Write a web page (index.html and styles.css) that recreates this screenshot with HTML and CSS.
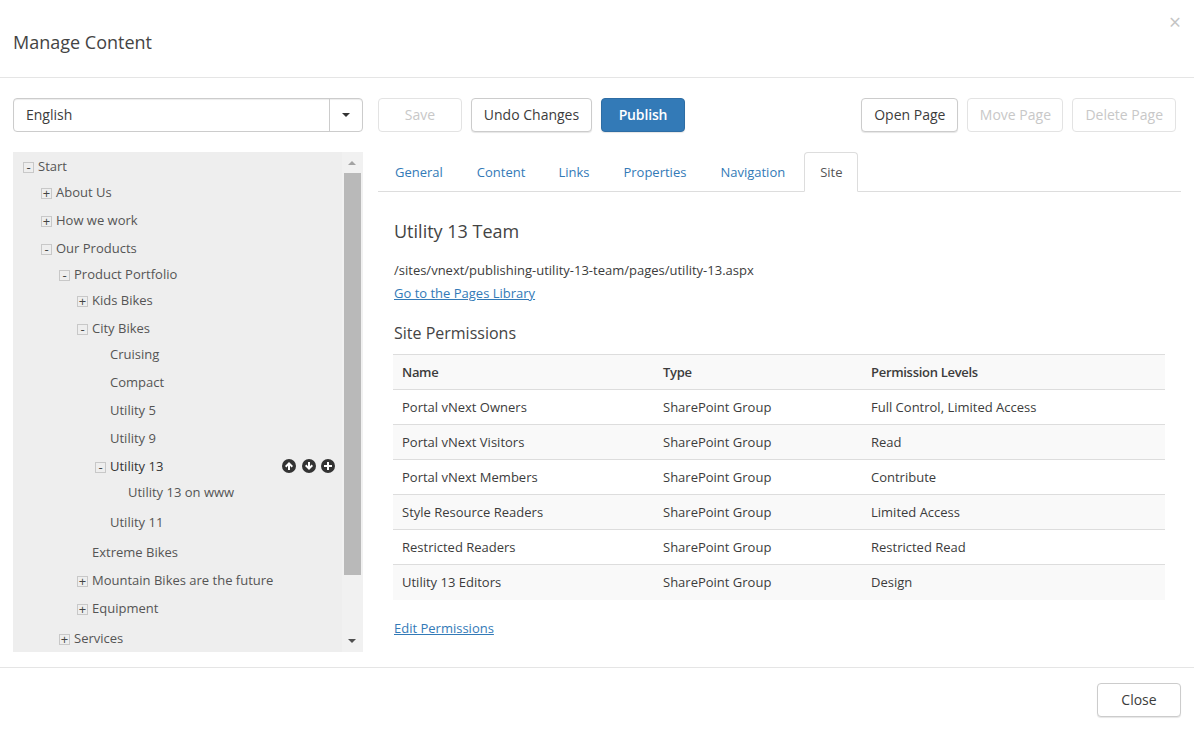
FILE: index.html
```html
<!DOCTYPE html>
<html lang="en">

<head>
    <meta charset="UTF-8">
    <title>Manage Content</title>
    <link rel="stylesheet" href="styles.css">
</head>

<body>
    <div class="modal">
        <header class="modal-header">
            <h1>Manage Content</h1>
            <span class="close-x">&times;</span>
        </header>

        <main class="modal-body">
            <aside class="left-col">
                <div class="lang-select">
                    <span class="lang-value">English</span>
                    <span class="lang-toggle"><i class="caret"></i></span>
                </div>
                <div class="tree-panel">
                    <div class="tree">
                        <ul>
                            <li class="open">
                                <div class="row"><span class="box">-</span>Start</div>
                                <ul>
                                    <li><div class="row"><span class="box">+</span>About Us</div></li>
                                    <li><div class="row"><span class="box">+</span>How we work</div></li>
                                    <li class="open">
                                        <div class="row"><span class="box">-</span>Our Products</div>
                                        <ul>
                                            <li class="open">
                                                <div class="row"><span class="box">-</span>Product Portfolio</div>
                                                <ul>
                                                    <li><div class="row"><span class="box">+</span>Kids Bikes</div></li>
                                                    <li class="open">
                                                        <div class="row"><span class="box">-</span>City Bikes</div>
                                                        <ul>
                                                            <li><div class="row"><span class="leaf"></span>Cruising</div></li>
                                                            <li><div class="row"><span class="leaf"></span>Compact</div></li>
                                                            <li><div class="row"><span class="leaf"></span>Utility 5</div></li>
                                                            <li><div class="row"><span class="leaf"></span>Utility 9</div></li>
                                                            <li class="open">
                                                                <div class="row current">
                                                                    <span class="box">-</span>Utility 13
                                                                    <span class="row-actions">
                                                                        <svg viewBox="0 0 14 14"><circle cx="7" cy="7" r="7"/><path d="M7 3 L11 7 L9.6 8.4 L8 6.8 V11 H6 V6.8 L4.4 8.4 L3 7 Z"/></svg>
                                                                        <svg viewBox="0 0 14 14"><circle cx="7" cy="7" r="7"/><path d="M7 11 L3 7 L4.4 5.6 L6 7.2 V3 H8 V7.2 L9.6 5.6 L11 7 Z"/></svg>
                                                                        <svg viewBox="0 0 14 14"><circle cx="7" cy="7" r="7"/><path d="M6 3 H8 V6 H11 V8 H8 V11 H6 V8 H3 V6 H6 Z"/></svg>
                                                                    </span>
                                                                </div>
                                                                <ul>
                                                                    <li><div class="row"><span class="leaf"></span>Utility 13 on www</div></li>
                                                                </ul>
                                                            </li>
                                                            <li><div class="row"><span class="leaf"></span>Utility 11</div></li>
                                                        </ul>
                                                    </li>
                                                    <li><div class="row"><span class="leaf"></span>Extreme Bikes</div></li>
                                                    <li><div class="row"><span class="box">+</span>Mountain Bikes are the future</div></li>
                                                    <li><div class="row"><span class="box">+</span>Equipment</div></li>
                                                </ul>
                                            </li>
                                            <li><div class="row"><span class="box">+</span>Services</div></li>
                                        </ul>
                                    </li>
                                </ul>
                            </li>
                        </ul>
                    </div>
                    <div class="scroll">
                        <i class="arrow-up"></i>
                        <div class="thumb"></div>
                        <i class="arrow-down"></i>
                    </div>
                </div>
            </aside>

            <section class="right-col">
                <div class="toolbar">
                    <button class="btn btn-save" disabled>Save</button>
                    <button class="btn btn-undo">Undo Changes</button>
                    <button class="btn btn-primary">Publish</button>
                    <span class="spacer"></span>
                    <button class="btn">Open Page</button>
                    <button class="btn btn-move" disabled>Move Page</button>
                    <button class="btn" disabled>Delete Page</button>
                </div>

                <ul class="tabs">
                    <li><a href="#">General</a></li>
                    <li><a href="#">Content</a></li>
                    <li><a href="#">Links</a></li>
                    <li><a href="#">Properties</a></li>
                    <li><a href="#">Navigation</a></li>
                    <li class="active"><a href="#">Site</a></li>
                </ul>

                <div class="tab-content">
                    <h2>Utility 13 Team</h2>
                    <p class="path">/sites/vnext/publishing-utility-13-team/pages/utility-13.aspx</p>
                    <a class="text-link" href="#">Go to the Pages Library</a>
                    <h3>Site Permissions</h3>
                    <table>
                        <thead>
                            <tr>
                                <th class="col-name">Name</th>
                                <th class="col-type">Type</th>
                                <th>Permission Levels</th>
                            </tr>
                        </thead>
                        <tbody>
                            <tr><td>Portal vNext Owners</td><td>SharePoint Group</td><td>Full Control, Limited Access</td></tr>
                            <tr><td>Portal vNext Visitors</td><td>SharePoint Group</td><td>Read</td></tr>
                            <tr><td>Portal vNext Members</td><td>SharePoint Group</td><td>Contribute</td></tr>
                            <tr><td>Style Resource Readers</td><td>SharePoint Group</td><td>Limited Access</td></tr>
                            <tr><td>Restricted Readers</td><td>SharePoint Group</td><td>Restricted Read</td></tr>
                            <tr><td>Utility 13 Editors</td><td>SharePoint Group</td><td>Design</td></tr>
                        </tbody>
                    </table>
                    <a class="text-link edit-link" href="#">Edit Permissions</a>
                </div>
            </section>
        </main>

        <footer class="modal-footer">
            <button class="btn btn-close">Close</button>
        </footer>
    </div>
</body>

</html>
```

FILE: styles.css
```css
body {
    margin: 0;
    background-color: #fff;
    color: #3c3c3c;
    font-family: "Open Sans", sans-serif;
    font-size: 13px;
    overflow: hidden;
}
.modal {
    width: 1194px;
    height: 730px;
    display: flex;
    flex-direction: column;
}
.modal-header {
    height: 77px;
    border-bottom: 1px solid #e5e5e5;
    padding-left: 13px;
    display: flex;
    align-items: center;
    justify-content: space-between;
    flex-shrink: 0;
}
.modal-header h1 {
    margin: 6px 0 0;
    font-size: 18px;
    font-weight: 400;
    color: #444;
}
.close-x {
    align-self: flex-start;
    margin: 10px 13px 0 0;
    font-size: 21px;
    line-height: 24px;
    color: #c4c4c4;
}
.modal-body {
    height: 589px;
    padding: 20px 13px 0;
    display: flex;
    gap: 15px;
    box-sizing: border-box;
    flex-shrink: 0;
}
.left-col {
    width: 350px;
    flex-shrink: 0;
}
.lang-select {
    height: 34px;
    box-sizing: border-box;
    border: 1px solid #ccc;
    border-radius: 4px;
    display: flex;
    font-size: 14px;
    box-shadow: inset 0 1px 1px rgba(0, 0, 0, 0.075);
}
.lang-value {
    flex: 1;
    padding-left: 12px;
    line-height: 32px;
}
.lang-toggle {
    width: 32px;
    border-left: 1px solid #ccc;
    display: flex;
    align-items: center;
    justify-content: center;
}
.caret {
    border-top: 4px solid #333;
    border-left: 4px solid transparent;
    border-right: 4px solid transparent;
}
.tree-panel {
    margin-top: 20px;
    height: 500px;
    background-color: #eee;
    display: flex;
    overflow: hidden;
}
.tree {
    flex: 1;
    padding: 1px 0 0 10px;
    color: #555;
    overflow: hidden;
}
.tree ul {
    list-style: none;
    margin: 0 0 2px;
    padding: 0;
}
.tree ul ul {
    padding-left: 18px;
}
.row {
    height: 28px;
    line-height: 26px;
    white-space: nowrap;
    display: flex;
    align-items: flex-start;
    position: relative;
}
.open > .row {
    height: 26px;
}
.row.current {
    color: #333;
}
.box {
    width: 9px;
    height: 9px;
    margin: 9px 4px 0 0;
    border: 1px solid #c8c8c8;
    font-size: 13px;
    line-height: 8px;
    text-align: center;
    color: #444;
    flex-shrink: 0;
}
.leaf {
    width: 15px;
    flex-shrink: 0;
}
.row-actions {
    position: absolute;
    right: 7px;
    top: 6px;
    display: flex;
    gap: 6px;
}
.row-actions svg {
    width: 14px;
    height: 14px;
    display: block;
}
.row-actions svg:last-child {
    margin-left: -1px;
}
.row-actions circle {
    fill: #333;
}
.row-actions path {
    fill: #fff;
}
.scroll {
    width: 21px;
    background-color: #f1f1f1;
    position: relative;
}
.thumb {
    position: absolute;
    top: 21px;
    left: 2px;
    width: 17px;
    height: 402px;
    background-color: #b9b9b9;
}
.arrow-up,
.arrow-down {
    position: absolute;
    left: 6px;
    border-left: 4px solid transparent;
    border-right: 4px solid transparent;
}
.arrow-up {
    top: 9px;
    border-bottom: 4px solid #a3a3a3;
}
.arrow-down {
    bottom: 9px;
    border-top: 4px solid #505050;
}
.right-col {
    flex: 1;
    min-width: 0;
}
.toolbar {
    display: flex;
    gap: 9px;
    padding-right: 5px;
}
.spacer {
    flex: 1;
}
.btn {
    height: 34px;
    padding: 0 12px 2px;
    background-color: #fff;
    border: 1px solid #ccc;
    border-radius: 4px;
    font-family: "Open Sans", sans-serif;
    font-size: 14px;
    color: #3c3c3c;
    box-shadow: 0 1px 1px rgba(0, 0, 0, 0.1);
}
.btn:disabled {
    border-color: #e3e3e3;
    color: #c8c8c8;
    box-shadow: none;
}
.btn-save {
    width: 84px;
}
.btn-undo {
    width: 121px;
    padding-left: 0;
    padding-right: 0;
}
.btn-move {
    width: 96px;
    padding-left: 0;
    padding-right: 0;
}
.btn-primary {
    width: 84px;
    background-color: #337ab7;
    border-color: #2e6da4;
    color: #fff;
    font-weight: 600;
    letter-spacing: -0.15px;
    padding-left: 0;
    padding-right: 0;
}
.tabs {
    list-style: none;
    margin: 20px 0 0;
    padding: 0;
    width: 803px;
    display: flex;
    border-bottom: 1px solid #ddd;
    height: 39px;
}
.tabs li {
    margin-right: 2px;
}
.tabs li:first-child a {
    padding-left: 16px;
}
.tabs li:nth-child(2) {
    margin-right: 1px;
}
.tabs li:nth-child(5) {
    margin-right: 3px;
}
.tabs a {
    display: block;
    height: 39px;
    box-sizing: border-box;
    padding: 0 15px;
    line-height: 38px;
    border: 1px solid transparent;
    border-radius: 4px 4px 0 0;
    color: #337ab7;
    text-decoration: none;
}
.tabs .active a {
    height: 40px;
    padding-right: 14px;
    background-color: #fff;
    border-color: #ddd #ddd #fff;
    color: #555;
}
.tab-content {
    padding: 0 16px;
}
.tab-content h2 {
    margin: 26px 0 0;
    font-size: 18px;
    font-weight: 400;
    line-height: 26px;
    color: #444;
}
.path {
    margin: 16px 0 0;
    line-height: 20px;
}
.text-link {
    display: inline-block;
    margin-top: 3px;
    line-height: 20px;
    color: #337ab7;
    text-decoration: underline;
}
.tab-content h3 {
    margin: 18px 0 0;
    font-size: 16px;
    font-weight: 400;
    line-height: 24px;
    color: #444;
}
table {
    width: 772px;
    margin: 9px 0 0 -1px;
    border-collapse: collapse;
    table-layout: fixed;
}
th, td {
    height: 35px;
    box-sizing: border-box;
    padding: 0 9px;
    text-align: left;
    border-top: 1px solid #ddd;
    font-weight: 400;
}
th {
    font-weight: 600;
    letter-spacing: -0.3px;
    background-color: #f9f9f9;
    border-bottom: 1px solid #ddd;
}
.col-name {
    width: 261px;
}
.col-type {
    width: 208px;
}
tbody tr:nth-child(even) td {
    background-color: #f9f9f9;
}
.edit-link {
    margin-top: 18px;
}
.modal-footer {
    flex: 1;
    border-top: 1px solid #e5e5e5;
    padding: 15px 13px 0 0;
    display: flex;
    justify-content: flex-end;
    align-items: flex-start;
}
.btn-close {
    width: 84px;
}
```
